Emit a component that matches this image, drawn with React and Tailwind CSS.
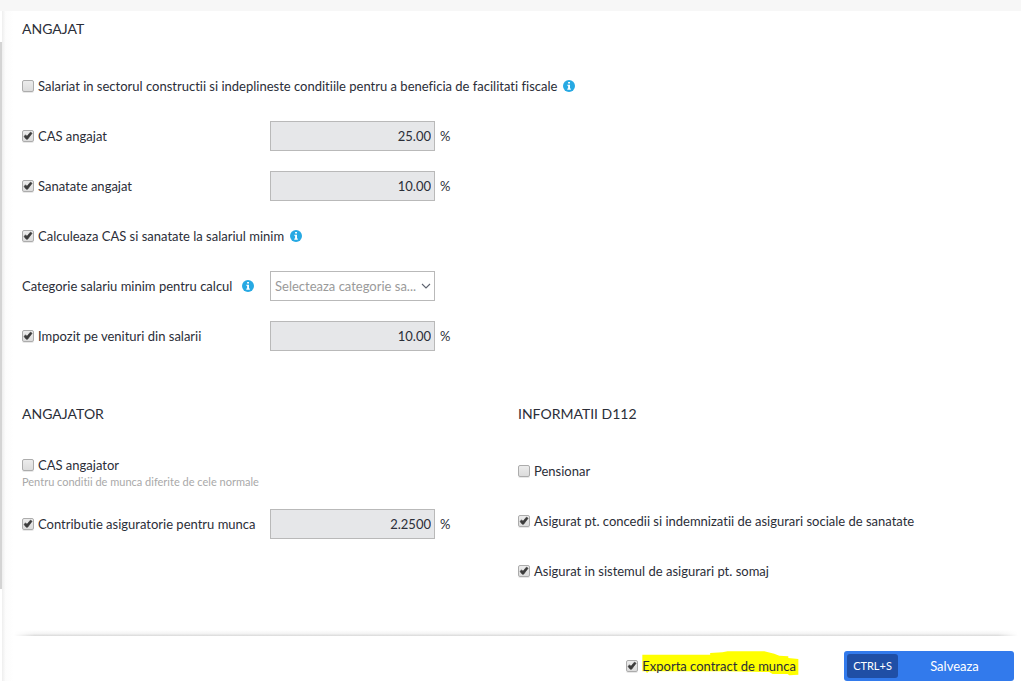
import React from "react";

function Checkbox({ id, label, checked, children }) {
  return (
    <div className="flex items-center gap-1">
      <span className="grid size-3 shrink-0 place-items-center">
        <input
          id={id}
          type="checkbox"
          defaultChecked={checked}
          className="peer col-start-1 row-start-1 size-3 appearance-none rounded-[2px] border border-[#acacac] bg-linear-to-b from-[#ececec] to-[#dcdcdc] shadow-[0_1px_0_#e8e8e8]"
        />
        <svg
          viewBox="0 0 12 12"
          aria-hidden="true"
          className="pointer-events-none col-start-1 row-start-1 hidden size-3 peer-checked:block"
        >
          <path d="M2 6.4 3.6 4.9 5 6.3 8.4 2.2 10.1 3.2 5.6 9.2H4.3Z" fill="#3c3c3c" stroke="#3c3c3c" strokeWidth=".7" strokeLinejoin="round" />
        </svg>
      </span>
      <label htmlFor={id} className="relative whitespace-nowrap">
        {children}
        <span className="relative">{label}</span>
      </label>
    </div>
  );
}

function Info() {
  return (
    <svg viewBox="0 0 12 12" role="img" aria-label="Info" className="size-3 shrink-0">
      <circle cx="6" cy="6" r="6" fill="#27a9e3" />
      <path d="M5.1 1.9h1.9v1.7H5.1zM4.3 4.7H7v3.9h.8v1.1H4.3V8.6h.8V5.8h-.8z" fill="#fff" />
    </svg>
  );
}

function Row({ children }) {
  return <div className="flex h-[50px] items-center">{children}</div>;
}

function PercentRow({ id, label, value }) {
  return (
    <Row>
      <div className="w-[248px] shrink-0">
        <Checkbox id={id} label={label} checked />
      </div>
      <input
        type="text"
        aria-label={label}
        defaultValue={value}
        disabled
        className="h-[30px] w-[165px] border border-[#b9b9b9] bg-[#e6e7e9] px-[3px] text-right text-[13px] text-[#2b2e38]"
      />
      <span className="ml-[5px]">%</span>
    </Row>
  );
}

function Heading({ children }) {
  return <h2 className="h-[50px] pt-2 text-[14px] leading-5">{children}</h2>;
}

export default function App() {
  return (
    <div className="min-h-screen bg-white font-['Lato',sans-serif] text-[13px] leading-5 text-[#2b2e38] [font-variant-ligatures:none]">
      <div className="h-[11px] bg-[#f7f7f7]" />
      <div className="flex">
        <div className="w-0.5 shrink-0 pt-[31px]">
          <div className="h-[547px] bg-[#d4d4d4]" />
        </div>
        <div className="w-3 shrink-0 bg-linear-to-r from-[#eeeeee] via-[#fcfcfc] via-30% to-white" />
        <main className="min-w-0 flex-1 pr-[7px] pl-2">
          <section>
            <Heading>ANGAJAT</Heading>
            <Row>
              <Checkbox id="sector" label="Salariat in sectorul constructii si indeplineste conditiile pentru a beneficia de facilitati fiscale" />
              <span className="ml-1.5">
                <Info />
              </span>
            </Row>
            <PercentRow id="cas" label="CAS angajat" value="25.00" />
            <PercentRow id="sanatate" label="Sanatate angajat" value="10.00" />
            <Row>
              <Checkbox id="minim" label="Calculeaza CAS si sanatate la salariul minim" checked />
              <span className="ml-1.5">
                <Info />
              </span>
            </Row>
            <Row>
              <div className="flex w-[248px] shrink-0 items-center gap-2.5">
                <label htmlFor="categorie">Categorie salariu minim pentru calcul</label>
                <Info />
              </div>
              <div className="grid w-[165px] items-center">
                <select
                  id="categorie"
                  className="col-start-1 row-start-1 h-[30px] w-full appearance-none border border-[#b9b9b9] bg-white pl-1 text-[13px] text-[#9a9a9a]"
                >
                  <option>Selecteaza categorie sa...</option>
                </select>
                <svg
                  viewBox="0 0 10 6"
                  aria-hidden="true"
                  className="pointer-events-none col-start-1 row-start-1 mr-1 h-1.5 w-2.5 justify-self-end"
                >
                  <path d="M1 1l4 4 4-4" fill="none" stroke="#5f6470" strokeWidth="1.1" />
                </svg>
              </div>
            </Row>
            <PercentRow id="impozit" label="Impozit pe venituri din salarii" value="10.00" />
          </section>

          <div className="grid grid-cols-2 pt-[35px]">
            <section>
              <Heading>ANGAJATOR</Heading>
              <div className="h-[53px] pt-[9px]">
                <Checkbox id="cas-angajator" label="CAS angajator" />
                <p className="text-[11px] leading-[14px] text-[#a9a9a9]">Pentru conditii de munca diferite de cele normale</p>
              </div>
              <PercentRow id="contributie" label="Contributie asiguratorie pentru munca" value="2.2500" />
            </section>
            <section>
              <Heading>INFORMATII D112</Heading>
              <Row>
                <Checkbox id="pensionar" label="Pensionar" />
              </Row>
              <Row>
                <Checkbox id="concedii" label="Asigurat pt. concedii si indemnizatii de asigurari sociale de sanatate" checked />
              </Row>
              <Row>
                <Checkbox id="somaj" label="Asigurat in sistemul de asigurari pt. somaj" checked />
              </Row>
            </section>
          </div>

          <footer className="mt-[34px] -ml-2">
            <div className="-mr-1 h-1.5 bg-linear-to-t from-[#d9d9d9] via-[#f4f4f4] via-40% to-white mask-x-from-98% mask-x-to-100%" />
            <div className="flex items-center justify-end gap-12 pt-[15px]">
              <Checkbox id="export" label="Exporta contract de munca" checked>
                <svg
                  viewBox="129 94 470 75"
                  preserveAspectRatio="none"
                  aria-hidden="true"
                  className="absolute -top-[5px] left-0 h-[25px] w-[157px]"
                >
                  <path
                    d="M130 105H333V100L370 98 385 95H495L525 102 540 108 567 110V115L597 118V165L570 167 565 163H520L510 157 380 155H150L144 160 140 155H130Z"
                    fill="#ffff00"
                  />
                </svg>
              </Checkbox>
              <button
                type="button"
                className="flex h-[30px] w-[170px] items-center rounded-[3px] bg-[#327aec] p-[3px] text-[13px] text-white"
              >
                <span className="flex h-6 w-[51px] items-center justify-center rounded-[3px] bg-[#1f4fa6] text-[11px]">CTRL+S</span>
                <span className="flex-1 text-center">Salveaza</span>
              </button>
            </div>
          </footer>
        </main>
      </div>
    </div>
  );
}
